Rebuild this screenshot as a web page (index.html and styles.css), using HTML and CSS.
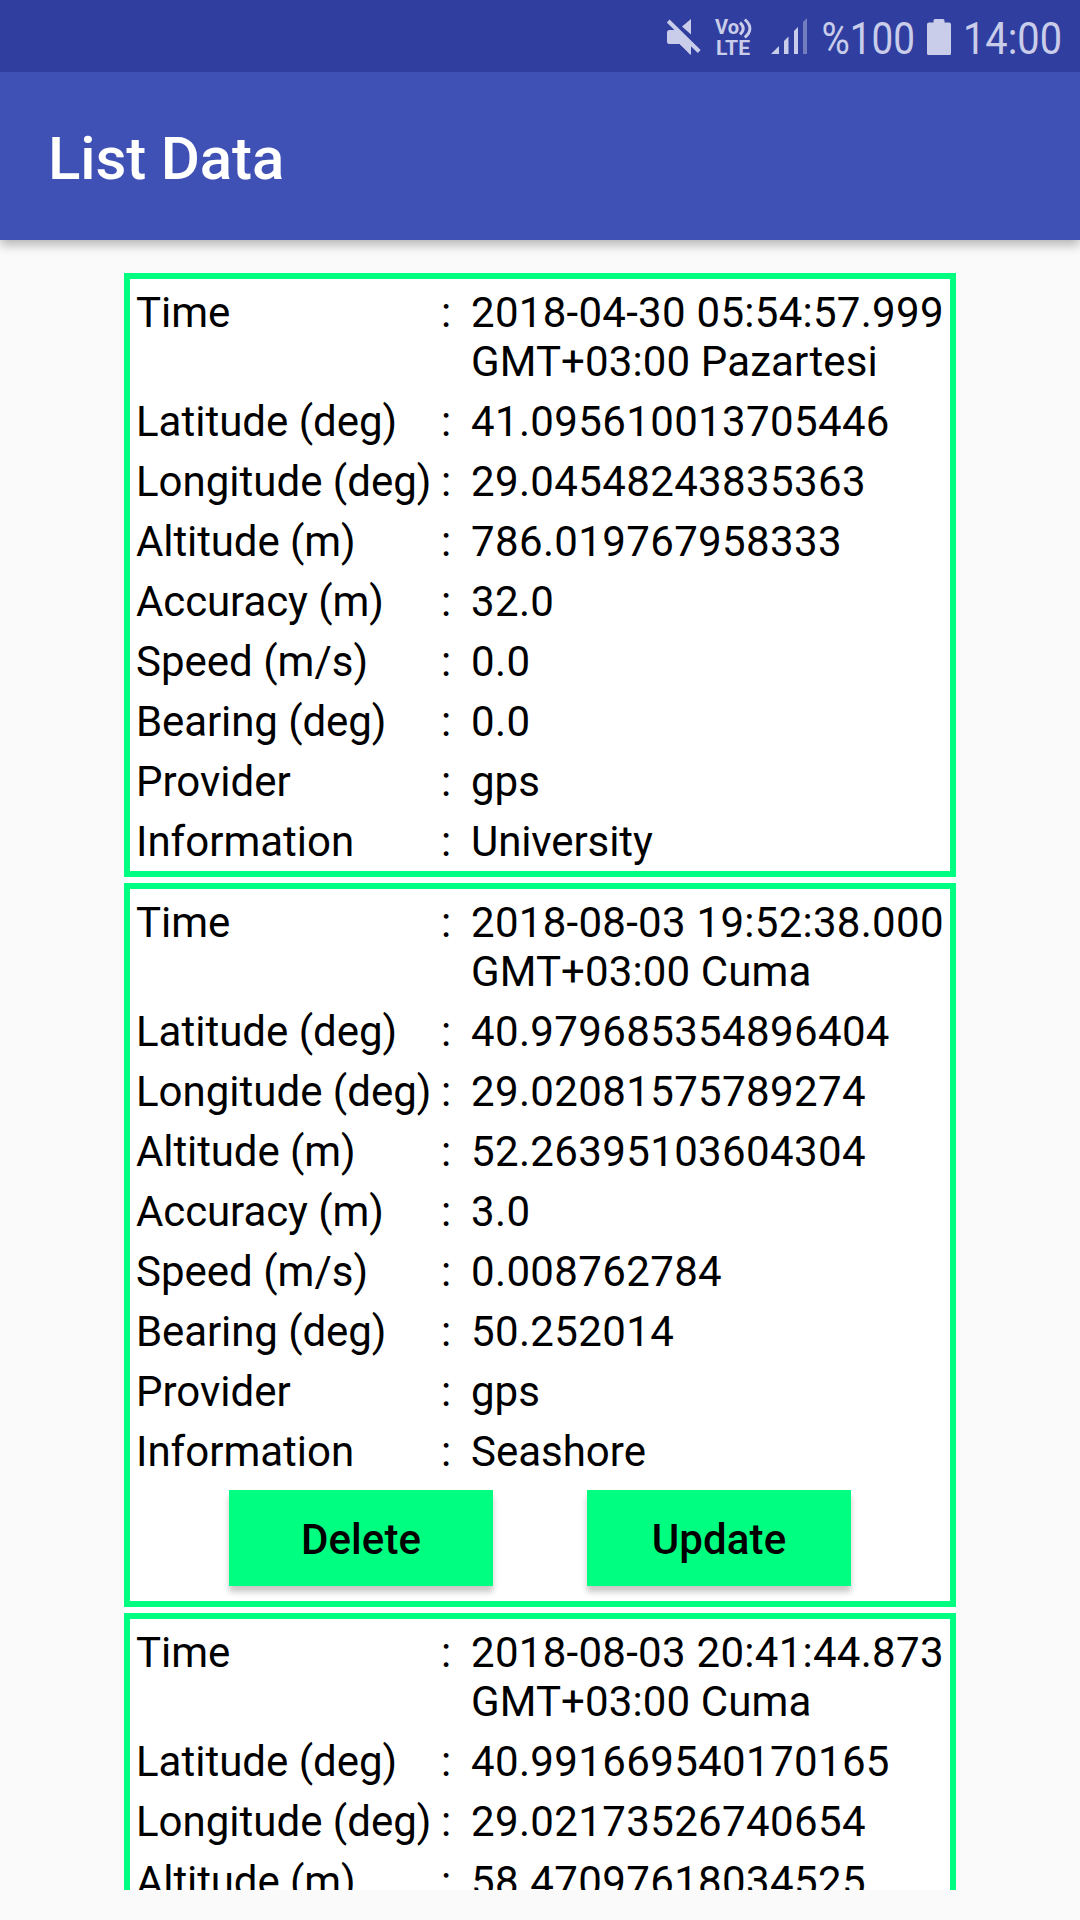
FILE: index.html
```html
<!DOCTYPE html>
<html lang="en">
<head>
<meta charset="utf-8">
<title>List Data</title>
<link rel="stylesheet" href="styles.css">
</head>
<body>
<div class="statusbar">
  <svg class="status-icon" width="36" height="72" viewBox="665 0 36 72" aria-label="Muted">
    <path d="M691 19V34.5L682 26.5ZM667 32.5Q667 30 669.5 30H673L691 48V54.5H690L680 44H669.5Q667 44 667 41.5Z"/>
    <path d="M673 30H678L691 43V54.5L680 44.5Z"/>
    <path d="M668.2 21L699.2 51.5" class="slash"/>
  </svg>
  <svg class="status-icon volte" width="42" height="72" viewBox="712 0 42 72">
    <text x="715" y="34" font-size="20.5" textLength="24" lengthAdjust="spacingAndGlyphs">Vo</text>
    <text x="716" y="54.7" font-size="21" textLength="34" lengthAdjust="spacingAndGlyphs">LTE</text>
    <path d="M740 22.7Q746.5 28.5 740 34.3M744.8 19.5Q755 28.5 744.8 37.5"/>
  </svg>
  <svg class="status-icon signal" width="40" height="72" viewBox="769 0 40 72">
    <path d="M771 54L779 46V54ZM784 41L788.5 36.5V54H784ZM794 31L798 27V54H794Z"/>
    <path class="dim" d="M803 22L807 18V54H803Z"/>
  </svg>
  <svg class="status-text" width="95" height="72" viewBox="820 0 95 72">
    <text x="821.5" y="54" font-size="45" textLength="93.5" lengthAdjust="spacingAndGlyphs">%100</text>
  </svg>
  <svg class="status-icon battery" width="26" height="72" viewBox="926 0 26 72">
    <path d="M935 19H943Q944.5 19 944.5 20.5V22.5H949Q951 22.5 951 24.5V53.5Q951 55 949.5 55H928.5Q927 55 927 53.5V24.5Q927 22.5 929 22.5H933.5V20.5Q933.5 19 935 19Z"/>
  </svg>
  <svg class="status-text clock" width="101" height="72" viewBox="961 0 101 72">
    <text x="963" y="54" font-size="45" textLength="99" lengthAdjust="spacingAndGlyphs">14:00</text>
  </svg>
</div>
<header class="appbar"><h1 class="title">List Data</h1></header>
<main class="list">
  <section class="card">
    <dl class="rows">
      <dt>Time</dt><dd><span class="stamp">2018-04-30 05:54:57.999</span><br><span class="zone">GMT+03:00 Pazartesi</span></dd>
      <dt>Latitude (deg)</dt><dd class="num">41.095610013705446</dd>
      <dt>Longitude (deg)</dt><dd class="num">29.04548243835363</dd>
      <dt class="tight">Altitude (m)</dt><dd class="num">786.019767958333</dd>
      <dt class="tight">Accuracy (m)</dt><dd class="num">32.0</dd>
      <dt>Speed (m/s)</dt><dd class="num">0.0</dd>
      <dt class="tight">Bearing (deg)</dt><dd class="num">0.0</dd>
      <dt>Provider</dt><dd>gps</dd>
      <dt>Information</dt><dd class="tight">University</dd>
    </dl>
  </section>
  <section class="card">
    <dl class="rows">
      <dt>Time</dt><dd><span class="stamp">2018-08-03 19:52:38.000</span><br><span class="zone">GMT+03:00 Cuma</span></dd>
      <dt>Latitude (deg)</dt><dd class="num">40.979685354896404</dd>
      <dt>Longitude (deg)</dt><dd class="num">29.02081575789274</dd>
      <dt class="tight">Altitude (m)</dt><dd class="num">52.26395103604304</dd>
      <dt class="tight">Accuracy (m)</dt><dd class="num">3.0</dd>
      <dt>Speed (m/s)</dt><dd class="num">0.008762784</dd>
      <dt class="tight">Bearing (deg)</dt><dd class="num">50.252014</dd>
      <dt>Provider</dt><dd>gps</dd>
      <dt>Information</dt><dd>Seashore</dd>
    </dl>
    <div class="actions">
      <button class="btn" type="button">Delete</button>
      <button class="btn" type="button">Update</button>
    </div>
  </section>
  <section class="card">
    <dl class="rows">
      <dt>Time</dt><dd><span class="stamp">2018-08-03 20:41:44.873</span><br><span class="zone">GMT+03:00 Cuma</span></dd>
      <dt>Latitude (deg)</dt><dd class="num">40.991669540170165</dd>
      <dt>Longitude (deg)</dt><dd class="num">29.02173526740654</dd>
      <dt class="tight">Altitude (m)</dt><dd class="num">58.47097618034525</dd>
    </dl>
  </section>
</main>
</body>
</html>
```
FILE: styles.css
```css
* { box-sizing: border-box; }
html, body { margin: 0; height: 1920px; overflow: hidden; }
body {
  display: flex;
  flex-direction: column;
  background: #fafafa;
  color: #000;
  font-family: Roboto, sans-serif;
}
.statusbar {
  flex: none;
  height: 72px;
  display: flex;
  justify-content: flex-end;
  padding-right: 18px;
  background: #303f9f;
  fill: #c9cdea;
}
.statusbar svg { display: block; flex: none; overflow: visible; }
.slash { stroke: #c9cdea; stroke-width: 4; }
.volte { margin-left: 11px; font-weight: 700; }
.volte path { fill: none; stroke: #c9cdea; stroke-width: 3; }
.signal { margin-left: 15px; }
.signal .dim { fill: #727dc0; }
.status-text { margin-left: 11px; }
.battery { margin-left: 11px; }
.clock { margin-left: 9px; }
.appbar {
  flex: none;
  height: 168px;
  display: flex;
  align-items: center;
  padding-left: 48px;
  background: #3f51b5;
  box-shadow: 0 5px 10px rgba(0, 0, 0, .28);
  clip-path: inset(0 0 -24px 0);
}
.title {
  margin: 5px 0 0;
  color: #fff;
  font-size: 60px;
  font-weight: 500;
  line-height: 70px;
  letter-spacing: -.13px;
}
.list {
  flex: none;
  width: 832px;
  height: 1617px;
  margin: 33px auto 0;
  display: flex;
  flex-direction: column;
  gap: 6px;
  overflow: hidden;
  background: #fff;
}
.card { flex: none; border: 6px solid #00ff80; padding: 9px 6px 5px; }
.rows {
  display: grid;
  grid-template-columns: 305px 1fr;
  row-gap: 11px;
  margin: 0;
  font-size: 42px;
  line-height: 49px;
  white-space: nowrap;
}
.rows dd { margin: 0; padding-left: 30px; }
.rows dd::before { content: ":"; float: left; margin-left: -30px; }
.num { letter-spacing: .36px; }
.stamp { letter-spacing: .28px; }
.zone { letter-spacing: .12px; }
.tight { letter-spacing: -.1px; }
.actions { display: flex; justify-content: center; gap: 94px; padding: 14px 0 10px; }
.btn {
  width: 264px;
  height: 96px;
  padding: 2px 0 0;
  border: 0;
  background: #00ff80;
  color: #000;
  font: 500 42px/49px Roboto, sans-serif;
  letter-spacing: .1px;
  box-shadow: 0 6px 6px rgba(0, 0, 0, .22);
}
```
